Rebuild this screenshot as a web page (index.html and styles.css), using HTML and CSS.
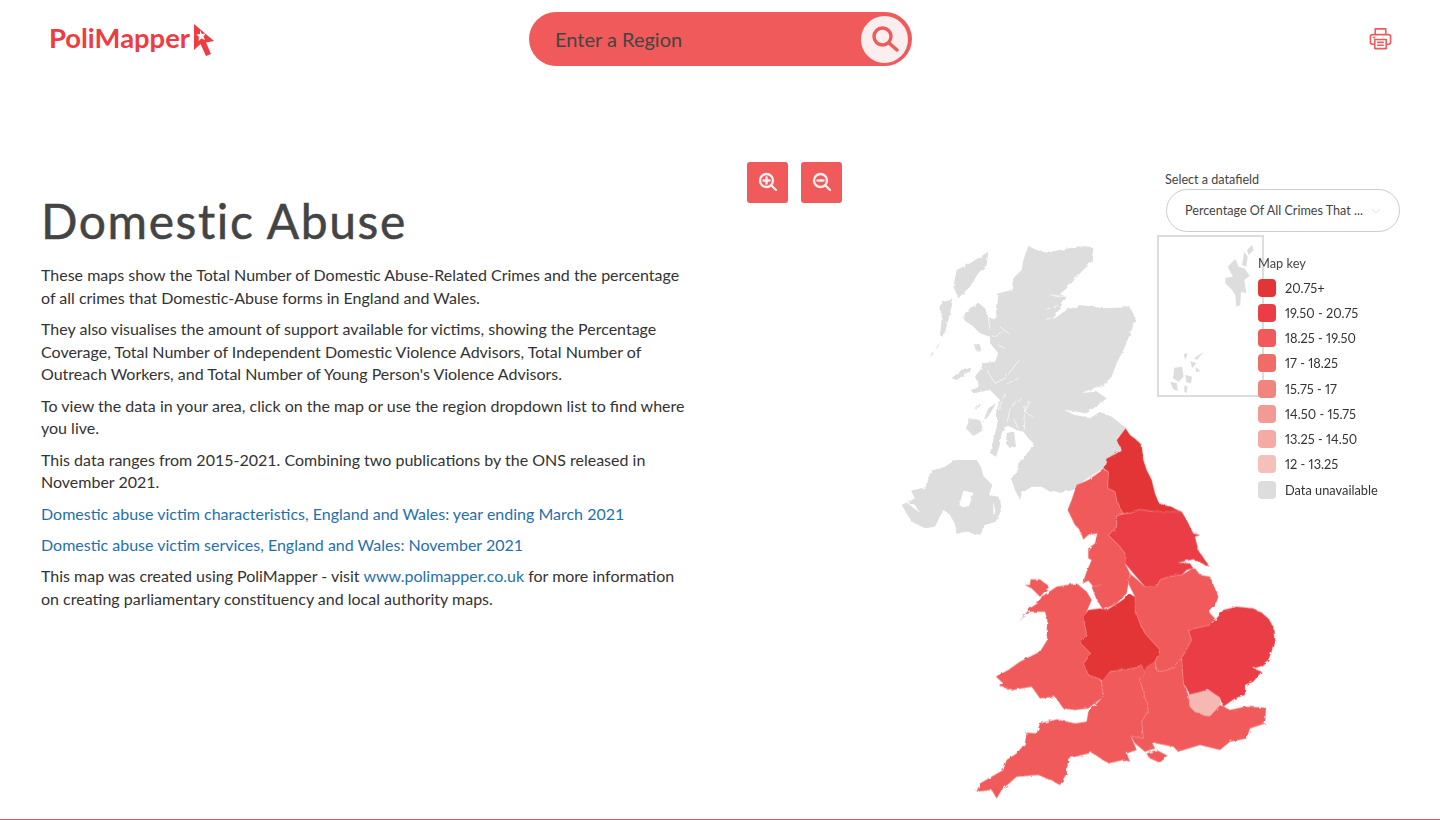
FILE: index.html
```html
<!DOCTYPE html>
<html lang="en">
<head>
    <meta charset="UTF-8">
    <meta name="viewport" content="width=device-width, initial-scale=1.0">
    <title>Domestic Abuse - PoliMapper</title>
    <link rel="stylesheet" href="styles.css">
</head>
<body>
    <div id="page">
        <header class="top">
            <a class="logo" href="#">
                <span class="logo-text">PoliMapper</span>
                <svg class="logo-mark" viewBox="0 0 22 34">
                    <path d="M1 1 L21 18 L13 19.500 L18 31 L13 33 L7.500 21 L1 27 Z" fill="#ee3c42"/>
                    <path d="M7 7.500 L9 11 L12.500 10.500 L10.500 13.500 L12 17 L8.500 15.500 L5.500 18 L6 14 L3.500 11.500 L7 11 Z" fill="#fff"/>
                </svg>
            </a>
            <div class="search">
                <input class="search-input" type="text" placeholder="Enter a Region">
                <button class="search-btn">
                    <svg viewBox="0 0 28 28" width="28" height="28" fill="none" stroke="#f05a5a" stroke-width="3.400" stroke-linecap="round">
                        <circle cx="11.500" cy="11.500" r="8.500"/>
                        <path d="M18 18 L26 25"/>
                    </svg>
                </button>
            </div>
            <a class="print" href="#">
                <svg viewBox="0 0 24 24" width="23" height="23" fill="none" stroke="#f05a5a" stroke-width="1.700" stroke-linejoin="round">
                    <path d="M6.500 8 V2 H17.500 V8"/>
                    <path d="M6 18 H3.500 A2 2 0 0 1 1.500 16 V10 A2 2 0 0 1 3.500 8 H20.500 A2 2 0 0 1 22.500 10 V16 A2 2 0 0 1 20.500 18 H18"/>
                    <rect x="6" y="13" width="12" height="9.500"/>
                    <path d="M8.500 16 H15.500 M8.500 19 H15.500 M4 11 H6.500"/>
                </svg>
            </a>
        </header>

        <main class="content">
            <section class="intro">
                <h1>Domestic Abuse</h1>
                <p>These maps show the Total Number of Domestic Abuse-Related Crimes and the percentage of all crimes that Domestic-Abuse forms in England and Wales.</p>
                <p>They also visualises the amount of support available for victims, showing the Percentage Coverage, Total Number of Independent Domestic Violence Advisors, Total Number of Outreach Workers, and Total Number of Young Person's Violence Advisors.</p>
                <p>To view the data in your area, click on the map or use the region dropdown list to find where you live.</p>
                <p>This data ranges from 2015-2021. Combining two publications by the ONS released in November 2021.</p>
                <p><a href="#">Domestic abuse victim characteristics, England and Wales: year ending March 2021</a></p>
                <p><a href="#">Domestic abuse victim services, England and Wales: November 2021</a></p>
                <p>This map was created using PoliMapper - visit <a href="#">www.polimapper.co.uk</a> for more information on creating parliamentary constituency and local authority maps.</p>
            </section>

            <section class="map-area">
                <div class="zoom-btns">
                    <button class="zoom-btn">
                        <svg viewBox="0 0 20 20" width="20" height="20" fill="none" stroke="#fbeeee" stroke-width="2.400" stroke-linecap="round">
                            <circle cx="8.500" cy="8.500" r="6.500"/>
                            <path d="M13.500 13.500 L18 18 M8.500 5.500 V11.500 M5.500 8.500 H11.500"/>
                        </svg>
                    </button>
                    <button class="zoom-btn">
                        <svg viewBox="0 0 20 20" width="20" height="20" fill="none" stroke="#fbeeee" stroke-width="2.400" stroke-linecap="round">
                            <circle cx="8.500" cy="8.500" r="6.500"/>
                            <path d="M13.500 13.500 L18 18 M5.500 8.500 H11.500"/>
                        </svg>
                    </button>
                </div>

                <svg class="uk-map" viewBox="890 230 400 580">
                    <defs>
                        <filter id="coast" x="-5%" y="-5%" width="110%" height="110%">
                            <feTurbulence type="fractalNoise" baseFrequency="0.18" numOctaves="2" seed="4"/>
                            <feDisplacementMap in="SourceGraphic" scale="3"/>
                        </filter>
                    </defs>
                    <g filter="url(#coast)">
                    <g transform="translate(890 230) scale(0.33333)" fill="#dddddd">
                        <path d="M415 48 L440 60 L470 68 L520 58 L575 48 L610 52 L605 95 L570 130 L535 170 L510 192 L530 200 L515 225 L490 268 L530 240 L570 225 L640 235 L720 232 L737 265 L725 300 L705 350 L680 400 L665 440 L640 465 L580 488 L620 485 L650 505 L625 525 L590 550 L525 540 L560 555 L600 565 L630 545 L665 560 L710 595 L680 625 L692 660 L645 695 L640 715 L600 740 L570 760 L550 780 L510 788 L480 785 L455 770 L425 770 L395 790 L390 810 L375 780 L363 745 L380 735 L385 700 L420 660 L430 640 L415 625 L400 605 L380 600 L362 590 L345 590 L335 610 L328 650 L318 680 L300 670 L310 630 L322 580 L320 540 L330 510 L300 480 L250 490 L243 480 L270 470 L255 440 L270 420 L280 400 L315 395 L325 370 L300 340 L300 320 L270 310 L250 290 L222 270 L225 250 L240 235 L265 218 L285 235 L295 262 L318 270 L325 190 L365 180 L370 145 L395 120 L400 90 Z"/>
                        <path d="M295 65 L290 105 L265 130 L240 170 L205 205 L190 170 L200 120 L240 100 Z"/>
                        <path d="M160 215 L190 208 L175 270 L160 322 L150 315 L155 265 L148 230 Z"/>
                        <path d="M150 335 L135 362 L145 350 Z M128 365 L120 380 L130 372 Z"/>
                        <path d="M185 445 L215 420 L243 408 L235 425 L200 450 Z"/>
                        <path d="M240 565 L270 570 L280 600 L250 618 L228 595 Z"/>
                        <path d="M255 540 L272 518 L268 535 Z"/>
                        <path d="M278 580 L295 535 L318 520 L300 552 Z"/>
                        <path d="M350 610 L372 603 L378 650 L360 655 L348 640 Z"/>
                        <path d="M252 343 L270 343 L273 360 L258 362 Z"/>
                        <g class="lochs">
                            <path d="M480 195 L530 200 M470 238 L505 225 M468 268 L495 262"/>
                            <path d="M580 488 L635 465"/>
                            <path d="M388 390 L345 445 L315 460 L290 420 M385 445 L350 462"/>
                            <path d="M395 505 L360 535 L352 575 M420 515 L405 545 L430 562 M370 565 L385 595 M405 530 L400 595"/>
                            <path d="M525 540 L555 553 L595 560"/>
                            <path d="M330 290 L358 312 M305 320 L340 305 M325 345 L345 355 M295 262 L300 300"/>
                            <path d="M345 490 L325 540"/>
                        </g>
                    </g>
                    <g transform="translate(895 450) scale(0.33333)" fill="#dddddd">
                        <path d="M20 165 L60 145 L48 122 L92 112 L108 62 L150 50 L180 30 L245 30 L258 50 L265 78 L292 105 L282 135 L310 140 L322 175 L302 215 L272 225 L255 255 L210 245 L185 252 L180 222 L165 195 L145 180 L120 230 L90 235 L50 215 Z"/>
                        <path d="M193 165 L205 122 L235 128 L222 168 L205 172 Z" fill="#ffffff"/>
                        <path d="M35 155 L60 165 L72 185 L50 170 Z" fill="#ffffff"/>
                        <path d="M295 155 L302 185 L295 195 Z" fill="#ffffff"/>
                    </g>
                    <g transform="translate(960 420) scale(0.33333)" class="regions">
                        <path class="r1" d="M497 25 L510 45 L530 60 L545 75 L550 120 L560 150 L575 180 L585 220 L597 250 L630 260 L665 275 L620 275 L580 275 L540 268 L510 280 L488 280 L470 240 L465 215 L443 205 L445 155 L430 145 L440 115 L485 92 L470 60 Z"/>
                        <path class="r2" d="M488 282 L510 280 L540 268 L580 275 L620 275 L665 275 L680 300 L700 340 L720 345 L705 350 L715 390 L748 440 L700 418 L655 428 L690 430 L700 445 L680 450 L665 465 L625 470 L600 480 L590 500 L555 500 L520 460 L495 430 L495 400 L475 375 L445 345 L470 320 L470 288 Z"/>
                        <path class="r3" d="M430 148 L445 155 L443 205 L465 215 L470 240 L488 280 L470 288 L470 320 L445 345 L475 375 L495 400 L495 430 L510 460 L505 490 L500 520 L470 550 L430 570 L410 540 L395 500 L425 495 L400 500 L385 482 L368 490 L380 455 L395 420 L385 415 L385 385 L405 370 L412 340 L385 345 L370 358 L360 330 L345 315 L323 270 L335 240 L350 195 L385 180 Z"/>
                        <path class="r3" d="M510 460 L555 500 L590 500 L600 480 L625 470 L665 465 L690 450 L705 445 L720 465 L750 470 L775 530 L770 545 L745 575 L765 595 L750 615 L685 630 L695 660 L665 715 L635 745 L605 755 L590 750 L585 725 L600 690 L555 640 L540 610 L525 570 L525 530 L505 490 Z"/>
                        <path class="r3" d="M195 495 L210 495 L212 478 L240 478 L268 500 L240 530 L215 505 Z"/>
                        <path class="r3" d="M183 598 L210 565 L235 548 L245 530 L290 500 L350 490 L380 515 L395 540 L380 575 L372 605 L380 640 L362 670 L392 700 L372 730 L385 765 L415 775 L425 785 L428 832 L385 865 L345 870 L310 865 L285 830 L240 835 L215 800 L160 810 L120 800 L130 790 L108 770 L145 750 L180 725 L240 695 L262 660 L260 640 L262 600 L255 575 L210 575 L180 600 Z"/>
                        <path class="r1" d="M385 570 L420 565 L440 570 L480 545 L510 523 L525 530 L525 570 L540 610 L555 640 L600 690 L585 725 L565 750 L555 790 L545 735 L520 745 L485 750 L450 755 L430 785 L415 775 L385 765 L372 730 L392 700 L362 670 L380 640 L372 605 L370 590 Z"/>
                        <path class="r2" d="M790 570 L830 560 L880 565 L905 578 L925 595 L940 620 L943 660 L935 695 L925 720 L900 740 L880 745 L905 755 L880 785 L855 795 L855 825 L825 835 L790 860 L780 835 L745 810 L690 825 L670 790 L665 715 L695 660 L685 630 L750 615 L770 595 Z"/>
                        <path class="r3" d="M665 715 L670 790 L685 825 L690 860 L705 875 L750 888 L780 855 L810 870 L855 860 L918 863 L915 910 L870 925 L860 955 L810 965 L780 990 L720 975 L655 995 L640 980 L590 970 L575 965 L585 985 L555 995 L525 970 L512 948 L550 955 L545 905 L565 870 L540 780 L560 740 L585 725 L590 750 L605 755 L635 745 Z"/>
                        <path class="r3" d="M425 785 L450 755 L485 750 L520 745 L545 735 L555 760 L540 780 L565 870 L545 905 L550 955 L512 948 L530 990 L500 1000 L510 1025 L490 1020 L445 1030 L395 998 L325 1015 L320 1060 L300 1095 L270 1080 L235 1065 L170 1070 L125 1110 L110 1135 L95 1110 L50 1115 L60 1090 L130 1050 L140 1020 L170 1000 L195 970 L200 938 L230 940 L240 910 L290 898 L345 910 L380 905 L385 875 L428 832 Z"/>
                        <path class="r3" d="M560 1000 L590 990 L622 1007 L600 1028 L570 1015 Z"/>
                        <path class="r8" d="M685 825 L745 810 L780 832 L780 855 L750 888 L735 888 L705 875 L690 860 Z"/>
                    </g>
                    </g>
                </svg>

                <div class="inset">
                    <svg viewBox="0 0 345 510" width="115" height="170">
                        <g fill="#dddddd" filter="url(#coast)">
                            <path d="M285 30 L290 45 L275 60 L270 45 Z"/>
                            <path d="M262 50 L272 65 L268 95 L255 90 Z"/>
                            <path d="M235 72 L245 95 L262 100 L278 122 L262 135 L268 175 L252 170 L250 210 L238 215 L235 180 L225 165 L205 145 L205 128 L228 125 L212 95 Z"/>
                            <path d="M80 358 L92 355 L85 375 Z M140 350 L120 375 L112 370 Z M100 378 L118 385 L105 400 Z M115 395 L130 408 L118 412 Z"/>
                            <path d="M52 398 L75 395 L80 425 L65 440 L48 430 Z"/>
                            <path d="M40 440 L60 445 L62 468 L48 462 Z"/>
                            <path d="M85 420 L105 425 L102 445 L88 442 Z M82 450 L92 455 L88 475 L82 470 Z"/>
                        </g>
                    </svg>
                </div>

                <div class="datafield">
                    <label class="datafield-label">Select a datafield</label>
                    <div class="select">
                        <span>Percentage Of All Crimes That ...</span>
                        <svg viewBox="0 0 10 6" width="10" height="6" fill="none" stroke="#fbe3e3" stroke-width="1.200"><path d="M1 1 L5 5 L9 1"/></svg>
                    </div>
                </div>

                <div class="legend">
                    <div class="legend-title">Map key</div>
                    <div class="legend-row"><i class="swatch s1"></i>20.75+</div>
                    <div class="legend-row"><i class="swatch s2"></i>19.50 - 20.75</div>
                    <div class="legend-row"><i class="swatch s3"></i>18.25 - 19.50</div>
                    <div class="legend-row"><i class="swatch s4"></i>17 - 18.25</div>
                    <div class="legend-row"><i class="swatch s5"></i>15.75 - 17</div>
                    <div class="legend-row"><i class="swatch s6"></i>14.50 - 15.75</div>
                    <div class="legend-row"><i class="swatch s7"></i>13.25 - 14.50</div>
                    <div class="legend-row"><i class="swatch s8"></i>12 - 13.25</div>
                    <div class="legend-row"><i class="swatch s9"></i>Data unavailable</div>
                </div>
            </section>
        </main>
    </div>
</body>
</html>
```

FILE: styles.css
```css
* {
    box-sizing: border-box;
}
body {
    margin: 0;
    font-family: Lato, "Open Sans", sans-serif;
    color: #333;
    background: white;
}
#page {
    height: 820px;
    overflow: hidden;
    border-bottom: 1px solid #e05c5c;
}
.top {
    display: flex;
    align-items: flex-start;
    height: 80px;
    padding: 12px 48px 0 49px;
}
.logo {
    display: flex;
    align-items: flex-start;
    width: 480px;
    padding-top: 8px;
    text-decoration: none;
}
.logo-text {
    font-size: 27.400px;
    font-weight: 700;
    line-height: 36px;
    color: #ee3c42;
}
.logo-mark {
    width: 22px;
    height: 34px;
    margin: 3px 0 0 3px;
}
.search {
    display: flex;
    align-items: center;
    justify-content: space-between;
    width: 383px;
    height: 54px;
    padding: 0 4px 0 26px;
    background: #f05a5a;
    border-radius: 27px;
}
.search-input {
    flex: 1;
    min-width: 0;
    border: 0;
    outline: 0;
    padding: 0;
    background: transparent;
    font-family: Lato, sans-serif;
    font-size: 20px;
    color: #444;
}
.search-input::placeholder {
    color: #444;
    opacity: 1;
}
.search-btn {
    display: flex;
    align-items: center;
    justify-content: center;
    width: 47px;
    height: 47px;
    padding: 0;
    border: 0;
    border-radius: 50%;
    background: #fbeeee;
}
.print {
    display: block;
    margin: 15px 0 0 auto;
    height: 24px;
}
.content {
    display: flex;
    height: 739px;
}
.intro {
    width: 700px;
    padding: 110px 15px 0 41px;
    font-size: 16px;
    line-height: 22.700px;
}
.intro h1 {
    margin: 0 0 12px;
    font-size: 48px;
    font-weight: 400;
    line-height: 62px;
    letter-spacing: 1.600px;
    color: #444;
    -webkit-text-stroke: 0.5px #444;
}
.intro p {
    margin: 0 0 8.600px;
}
.intro a {
    color: #1f6fb0;
    text-decoration: none;
}
.map-area {
    position: relative;
    flex: 1;
}
.zoom-btns {
    position: absolute;
    left: 47px;
    top: 82px;
    display: flex;
    gap: 13px;
}
.zoom-btn {
    display: flex;
    align-items: center;
    justify-content: center;
    width: 41px;
    height: 41px;
    padding: 0 0 2px;
    border: 0;
    border-radius: 3px;
    background: #f05a5a;
}
.uk-map {
    position: absolute;
    left: 190px;
    top: 150px;
    width: 400px;
    height: 580px;
}
.lochs path {
    fill: none;
    stroke: #fff;
    stroke-width: 2;
}
.regions path {
    stroke: #f79b9b;
    stroke-width: 1;
}
.r1 { fill: #e33535; }
.r2 { fill: #ea3d45; }
.r3 { fill: #f05a5a; }
.r8 { fill: #f5b8b2; }
.inset {
    position: absolute;
    left: 457px;
    top: 155px;
    width: 107px;
    height: 162px;
    border: 2px solid #ddd;
    overflow: hidden;
}
.inset svg {
    display: block;
    margin: -2px 0 0 -2px;
}
.datafield {
    position: absolute;
    left: 465px;
    top: 92px;
    width: 235px;
}
.datafield-label {
    display: block;
    margin-bottom: 2px;
    font-size: 12.600px;
    line-height: 15px;
    color: #444;
}
.select {
    display: flex;
    align-items: center;
    justify-content: space-between;
    width: 234px;
    height: 43px;
    margin-left: 1px;
    padding: 0 18px;
    border: 1px solid #ccc;
    border-radius: 22px;
    font-size: 12.600px;
    color: #444;
    background: white;
}
.legend {
    position: absolute;
    left: 558px;
    top: 175px;
    font-size: 12.800px;
    font-variant-numeric: proportional-nums;
    color: #333;
}
.legend-title {
    line-height: 16px;
    margin-bottom: 7.500px;
    color: #444;
}
.legend-row {
    display: flex;
    align-items: center;
    gap: 9px;
    height: 18px;
    margin-bottom: 7.250px;
    white-space: nowrap;
}
.swatch {
    width: 18px;
    height: 18px;
    border-radius: 4px;
}
.s1 { background: #e33535; }
.s2 { background: #ea3d45; }
.s3 { background: #f05a5a; }
.s4 { background: #f06c66; }
.s5 { background: #f2847e; }
.s6 { background: #f49a94; }
.s7 { background: #f5aaa5; }
.s8 { background: #f6bfb8; }
.s9 { background: #ddd; }
```
